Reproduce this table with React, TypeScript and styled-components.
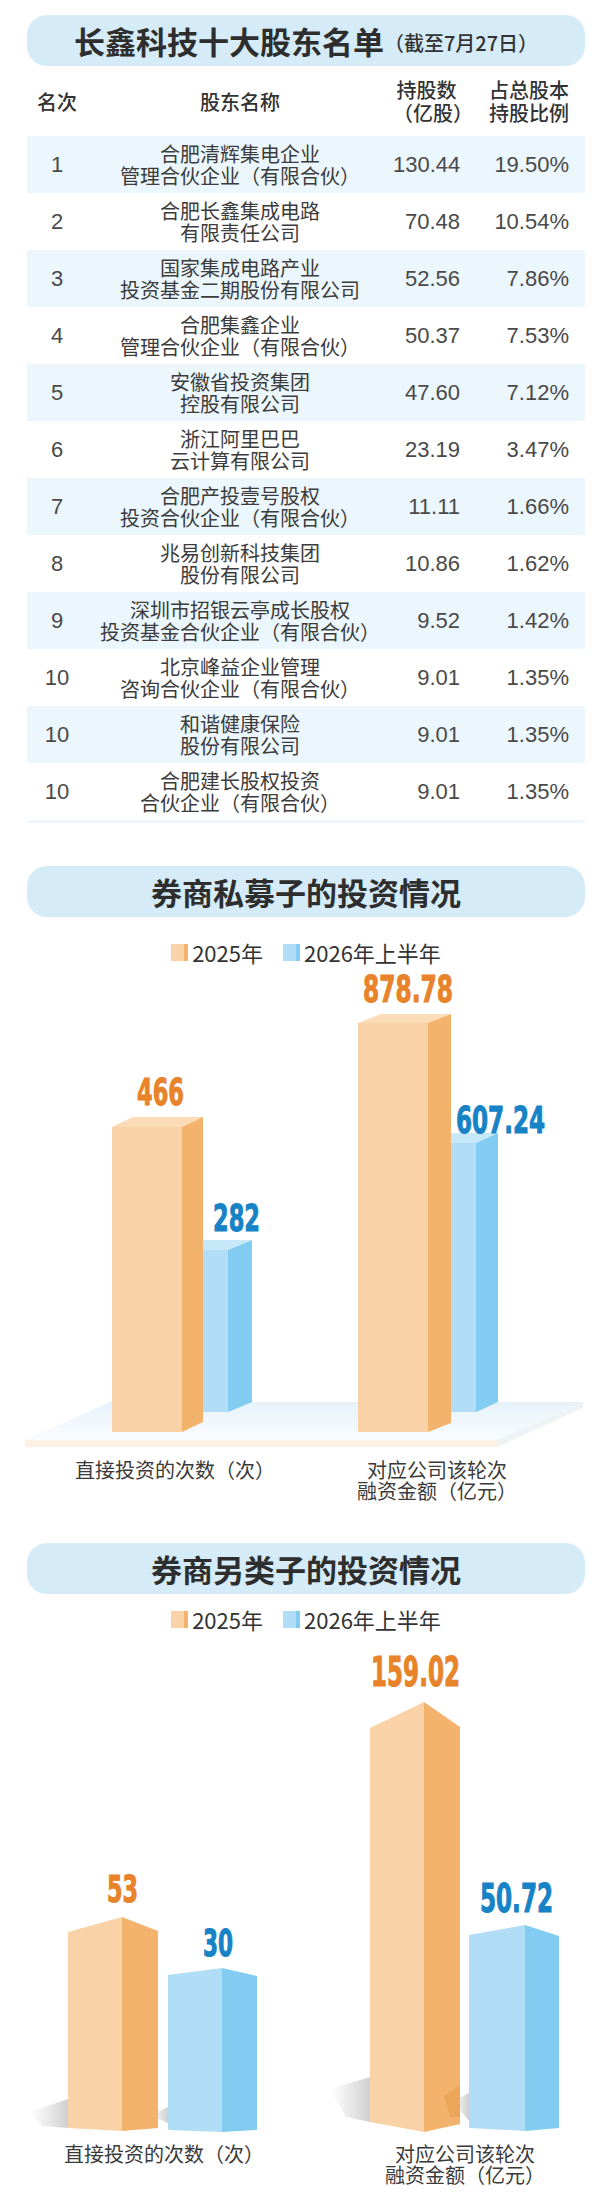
import React from 'react';
import styled, { createGlobalStyle } from 'styled-components';

type Pt = [number, number];

const ORANGE = { front: '#f9d3a7', side: '#f3b36c', top: '#fbdcb6', text: '#e8832a' };
const BLUE = { front: '#b1def6', side: '#82ccf1', top: '#c6e8f9', text: '#1783c6' };
type Tone = 'orange' | 'blue';
const tones = { orange: ORANGE, blue: BLUE };

const GlobalStyle = createGlobalStyle`
  html, body {
    margin: 0;
    padding: 0;
    background: #ffffff;
  }
  body {
    font-family: "Noto Sans CJK SC", "Noto Sans", sans-serif;
    color: #333;
  }
`;

const Page = styled.div`
  width: 600px;
  padding: 15px 0 25px;
  box-sizing: border-box;
`;

const TitleBar = styled.div<{ $top?: number }>`
  margin: ${(p) => p.$top ?? 0}px 15px 0 27px;
  height: 51px;
  border-radius: 20px;
  background: #d5ecf8;
  display: flex;
  align-items: center;
  justify-content: center;
  font-family: "Noto Sans CJK SC", sans-serif;
  font-weight: 700;
  font-size: 31px;
  line-height: 1;
  color: #2e2e2e;
`;

const TitleNote = styled.span`
  font-size: 20px;
  font-weight: 500;
  color: #333;
  margin-top: 4px;
`;

const Table = styled.div`
  margin: 0 15px 0 27px;
  border-bottom: 3px solid #edf7fd;
`;

const HeadRow = styled.div`
  display: grid;
  grid-template-columns: 60px 306px 67px 109px;
  align-items: center;
  height: 70px;
  font-size: 20px;
  font-weight: 500;
  line-height: 23px;
  color: #333;
`;

const HeadCell = styled.div<{ $align?: 'center' | 'right' }>`
  text-align: ${(p) => p.$align ?? 'center'};
  white-space: nowrap;
`;

const Row = styled.div<{ $shade: boolean }>`
  display: grid;
  grid-template-columns: 60px 306px 67px 109px;
  align-items: center;
  height: 57px;
  background: ${(p) => (p.$shade ? '#ebf6fd' : '#ffffff')};
`;

const NameCell = styled.div`
  text-align: center;
  font-size: 20px;
  line-height: 22px;
  color: #3c3c3c;
  white-space: nowrap;
`;

const NumCell = styled.div<{ $align?: 'center' | 'right' }>`
  text-align: ${(p) => p.$align ?? 'right'};
  font-family: "Liberation Sans", Arial, sans-serif;
  font-size: 22px;
  color: #4a4a4a;
  white-space: nowrap;
`;

const Legend = styled.div<{ $top: number }>`
  margin: ${(p) => p.$top}px 15px 0 27px;
  height: 30px;
  display: flex;
  align-items: center;
  justify-content: center;
  gap: 20px;
`;

const LegendItem = styled.div`
  display: flex;
  align-items: center;
  gap: 4px;
  font-size: 22px;
  line-height: 1;
  color: #333;
`;

const Swatch = styled.span<{ $tone: Tone }>`
  width: 17px;
  height: 17px;
  background: linear-gradient(
    90deg,
    ${(p) => tones[p.$tone].front} 0 74%,
    ${(p) => tones[p.$tone].side} 74% 100%
  );
`;

const ChartSvg = styled.svg`
  display: block;
`;

const ValueText = styled.text<{ $tone: Tone }>`
  font-family: "Liberation Sans Narrow", "DejaVu Sans Condensed", "Liberation Sans", sans-serif;
  font-weight: 700;
  fill: ${(p) => tones[p.$tone].text};
  stroke: ${(p) => tones[p.$tone].text};
  stroke-width: 1px;
`;

const Categories = styled.div<{ $cols: string }>`
  display: grid;
  grid-template-columns: ${(p) => p.$cols};
  font-size: 20px;
  line-height: 21px;
  color: #3a3a3a;
`;

const Category = styled.div`
  text-align: center;
  white-space: nowrap;
`;

const rows = [
  ['1', '合肥清辉集电企业', '管理合伙企业（有限合伙）', '130.44', '19.50%'],
  ['2', '合肥长鑫集成电路', '有限责任公司', '70.48', '10.54%'],
  ['3', '国家集成电路产业', '投资基金二期股份有限公司', '52.56', '7.86%'],
  ['4', '合肥集鑫企业', '管理合伙企业（有限合伙）', '50.37', '7.53%'],
  ['5', '安徽省投资集团', '控股有限公司', '47.60', '7.12%'],
  ['6', '浙江阿里巴巴', '云计算有限公司', '23.19', '3.47%'],
  ['7', '合肥产投壹号股权', '投资合伙企业（有限合伙）', '11.11', '1.66%'],
  ['8', '兆易创新科技集团', '股份有限公司', '10.86', '1.62%'],
  ['9', '深圳市招银云亭成长股权', '投资基金合伙企业（有限合伙）', '9.52', '1.42%'],
  ['10', '北京峰益企业管理', '咨询合伙企业（有限合伙）', '9.01', '1.35%'],
  ['10', '和谐健康保险', '股份有限公司', '9.01', '1.35%'],
  ['10', '合肥建长股权投资', '合伙企业（有限合伙）', '9.01', '1.35%'],
];

const pts = (list: Pt[]) => list.map((p) => p.join(',')).join(' ');

// box seen from the front, with its top and right side showing
interface BoxProps {
  tone: Tone;
  x: number;
  w: number;
  d: number;
  dy: number;
  top: number;
  bottom: number;
}

const Box3d = ({ tone, x, w, d, dy, top, bottom }: BoxProps) => {
  const c = tones[tone];
  return (
    <g>
      <rect x={x} y={top} width={w} height={bottom - top} fill={c.front} />
      <polygon points={pts([[x, top], [x + d, top - dy], [x + w + d, top - dy], [x + w, top]])} fill={c.top} />
      <polygon points={pts([[x + w, top], [x + w + d, top - dy], [x + w + d, bottom - dy], [x + w, bottom]])} fill={c.side} />
    </g>
  );
};

// prism seen on its corner: left face, ridge, right face
interface PrismProps {
  tone: Tone;
  xs: [number, number, number];
  tops: [number, number, number];
  bottoms: [number, number, number];
}

const Prism = ({ tone, xs, tops, bottoms }: PrismProps) => {
  const c = tones[tone];
  const [l, m, r] = xs;
  return (
    <g>
      <polygon points={pts([[l, tops[0]], [m, tops[1]], [m, bottoms[1]], [l, bottoms[0]]])} fill={c.front} />
      <polygon points={pts([[m, tops[1]], [r, tops[2]], [r, bottoms[2]], [m, bottoms[1]]])} fill={c.side} />
    </g>
  );
};

interface ValueProps {
  tone: Tone;
  cx: number;
  base: number;
  width: number;
  size: number;
  children: string;
}

const Value = ({ tone, cx, base, width, size, children }: ValueProps) => (
  <ValueText
    $tone={tone}
    x={cx - width / 2}
    y={base}
    fontSize={size}
    textLength={width}
    lengthAdjust="spacingAndGlyphs"
  >
    {children}
  </ValueText>
);

const LegendRow = ({ top }: { top: number }) => (
  <Legend $top={top}>
    <LegendItem>
      <Swatch $tone="orange" />
      2025年
    </LegendItem>
    <LegendItem>
      <Swatch $tone="blue" />
      2026年上半年
    </LegendItem>
  </Legend>
);

const PrivateChart = () => (
  <ChartSvg width={600} height={492} viewBox="0 967 600 492">
    <defs>
      <linearGradient id="floorTop" x1="0" y1="0" x2="0" y2="1">
        <stop offset="0" stopColor="#e7f2fb" />
        <stop offset="1" stopColor="#fafcfe" />
      </linearGradient>
    </defs>
    <polygon points={pts([[25, 1440], [110, 1402], [583, 1402], [497, 1440]])} fill="url(#floorTop)" />
    <polygon points={pts([[25, 1440], [497, 1440], [497, 1447], [25, 1447]])} fill="#fdf1e6" />
    <polygon points={pts([[497, 1440], [583, 1402], [583, 1408], [497, 1447]])} fill="#eef3f5" />

    <Box3d tone="blue" x={180} w={48} d={24} dy={10} top={1250} bottom={1412} />
    <Box3d tone="orange" x={112} w={70} d={21} dy={10} top={1127} bottom={1432} />
    <Box3d tone="blue" x={430} w={46} d={22} dy={10} top={1143} bottom={1412} />
    <Box3d tone="orange" x={358} w={70} d={23} dy={9} top={1023} bottom={1432} />

    <Value tone="orange" cx={160.5} base={1105} width={47} size={38}>466</Value>
    <Value tone="blue" cx={236.5} base={1231} width={47} size={38}>282</Value>
    <Value tone="orange" cx={408} base={1002} width={90} size={38}>878.78</Value>
    <Value tone="blue" cx={500.5} base={1133} width={89} size={38}>607.24</Value>
  </ChartSvg>
);

const OtherChart = () => (
  <ChartSvg width={600} height={509} viewBox="0 1635 600 509">
    <defs>
      <linearGradient id="shade" x1="0" y1="0" x2="1" y2="0">
        <stop offset="0" stopColor="#b4b4b4" stopOpacity="0" />
        <stop offset="1" stopColor="#a8a8a8" stopOpacity="0.55" />
      </linearGradient>
    </defs>
    <polygon points={pts([[30, 2113], [68, 2100], [68, 2129], [42, 2127]])} fill="url(#shade)" />
    <polygon points={pts([[150, 2116], [168, 2108], [168, 2124]])} fill="url(#shade)" />
    <polygon points={pts([[330, 2090], [370, 2078], [370, 2123], [346, 2118]])} fill="url(#shade)" />
    <polygon points={pts([[452, 2102], [469, 2094], [469, 2122]])} fill="url(#shade)" />

    <Prism tone="orange" xs={[68, 122, 158]} tops={[1933, 1918, 1932]} bottoms={[2129, 2132, 2129]} />
    <Prism tone="blue" xs={[168, 222, 257]} tops={[1976, 1969, 1977]} bottoms={[2131, 2133, 2131]} />
    <Prism tone="orange" xs={[370, 424, 460]} tops={[1729, 1703, 1728]} bottoms={[2123, 2133, 2125]} />
    <Prism tone="blue" xs={[469, 525, 559]} tops={[1936, 1926, 1937]} bottoms={[2129, 2132, 2129]} />
    <polygon points={pts([[444, 2097], [460, 2086], [460, 2118], [450, 2118]])} fill="#e39a4d" opacity={0.55} />

    <Value tone="orange" cx={122.5} base={1903} width={31} size={37}>53</Value>
    <Value tone="blue" cx={218} base={1957} width={30} size={37}>30</Value>
    <Value tone="orange" cx={415.5} base={1687} width={89} size={40}>159.02</Value>
    <Value tone="blue" cx={516.5} base={1913} width={73} size={39}>50.72</Value>
  </ChartSvg>
);

const App = () => (
  <Page>
    <GlobalStyle />
    <TitleBar>
      长鑫科技十大股东名单
      <TitleNote>（截至7月27日）</TitleNote>
    </TitleBar>
    <Table>
      <HeadRow>
        <HeadCell>名次</HeadCell>
        <HeadCell>股东名称</HeadCell>
        <HeadCell>
          持股数
          <br />
          （亿股）
        </HeadCell>
        <HeadCell $align="right">
          占总股本
          <br />
          持股比例
        </HeadCell>
      </HeadRow>
      {rows.map(([rank, line1, line2, shares, pct], i) => (
        <Row key={i} $shade={i % 2 === 0}>
          <NumCell $align="center">{rank}</NumCell>
          <NameCell>
            {line1}
            <br />
            {line2}
          </NameCell>
          <NumCell>{shares}</NumCell>
          <NumCell>{pct}</NumCell>
        </Row>
      ))}
    </Table>

    <TitleBar $top={43}>券商私募子的投资情况</TitleBar>
    <LegendRow top={20} />
    <PrivateChart />
    <Categories $cols="350px 174px">
      <Category>直接投资的次数（次）</Category>
      <Category>
        对应公司该轮次
        <br />
        融资金额（亿元）
      </Category>
    </Categories>

    <TitleBar $top={42}>券商另类子的投资情况</TitleBar>
    <LegendRow top={10} />
    <OtherChart />
    <Categories $cols="328px 274px">
      <Category>直接投资的次数（次）</Category>
      <Category>
        对应公司该轮次
        <br />
        融资金额（亿元）
      </Category>
    </Categories>
  </Page>
);

export default App;
